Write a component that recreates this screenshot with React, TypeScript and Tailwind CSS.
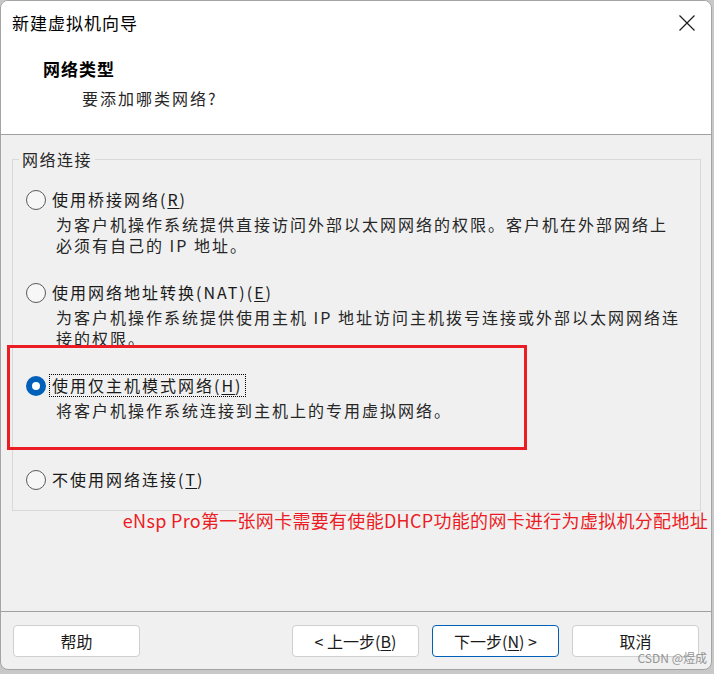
import React from 'react';

// 新建虚拟机向导 - 网络类型页
const cjk = { fontFamily: '"Noto Sans CJK SC", "Noto Sans", sans-serif' };

function Radio({ checked }: { checked?: boolean }) {
  if (checked) {
    return (
      <span className="flex h-[20px] w-[20px] shrink-0 items-center justify-center rounded-full bg-[#005fb8]">
        <span className="h-[8px] w-[8px] rounded-full bg-white" />
      </span>
    );
  }
  return <span className="h-[20px] w-[20px] shrink-0 rounded-full border-[1.5px] border-[#5a5a5a] bg-[#f7f7f7]" />;
}

function Option({
  label,
  hotkey,
  lines,
  checked,
  className,
}: {
  label: string;
  hotkey: string;
  lines?: string[];
  checked?: boolean;
  className?: string;
}) {
  return (
    <div className={className}>
      <div className="flex h-[21px] items-center">
        <Radio checked={checked} />
        <span
          className={`ml-[4px] whitespace-nowrap px-[2px] leading-[21px] ${
            checked ? 'outline outline-1 outline-dotted outline-black' : ''
          }`}
        >
          {label}(<span className="underline underline-offset-2">{hotkey}</span>)
        </span>
      </div>
      {lines && (
        <div className="mt-[4px] pl-[30px] leading-[21px] text-[#262626]">
          {lines.map(l => (
            <div key={l} className="whitespace-nowrap">
              {l}
            </div>
          ))}
        </div>
      )}
    </div>
  );
}

function Button({ children, primary }: { children: React.ReactNode; primary?: boolean }) {
  return (
    <button
      className={`h-[32px] w-[127px] rounded-[4px] border bg-white text-[16px] text-[#1a1a1a] ${
        primary ? 'border-[#005fb8]' : 'border-[#cfcfcf]'
      }`}
    >
      {children}
    </button>
  );
}

export default function App() {
  return (
    <div className="h-[674px] w-[714px] overflow-hidden bg-[#c8c8c8]" style={cjk}>
      <div className="relative flex h-[670px] w-[712px] flex-col overflow-hidden rounded-[8px] border border-[#a4a4a4] bg-[#f0f0f0]">
        {/* 标题栏 + 页头 */}
        <div className="h-[133px] bg-white">
          <div className="flex h-[44px] items-center justify-between pl-[11px] pr-[15px]">
            <span className="text-[17px] tracking-[1px] text-black">新建虚拟机向导</span>
            <svg width="18" height="18" viewBox="0 0 18 18" className="text-[#1a1a1a]">
              <path d="M1.5 1.5 L16.5 16.5 M16.5 1.5 L1.5 16.5" stroke="currentColor" strokeWidth="1.2" fill="none" />
            </svg>
          </div>
          <div className="mt-[13px] pl-[42px] text-[17px] font-bold leading-[22px] tracking-[1px] text-black">网络类型</div>
          <div className="mt-[7px] pl-[81px] text-[16px] leading-[22px] tracking-[2px] text-[#262626]">要添加哪类网络?</div>
        </div>
        <div className="h-px bg-[#a0a0a0]" />

        {/* 网络连接 */}
        <fieldset className="ml-[11px] mt-[14px] w-[689px] border border-[#d9d9d9] pb-[20px] pl-[13px] text-[16px] tracking-[2px] text-[#1a1a1a]">
          <legend className="ml-[-7px] px-[3px] text-[16px] leading-[20px] tracking-[1.5px] text-[#262626]">网络连接</legend>
          <Option
            className="mt-[20px]"
            label="使用桥接网络"
            hotkey="R"
            lines={['为客户机操作系统提供直接访问外部以太网网络的权限。客户机在外部网络上', '必须有自己的 IP 地址。']}
          />
          <Option
            className="mt-[26px]"
            label="使用网络地址转换(NAT)"
            hotkey="E"
            lines={['为客户机操作系统提供使用主机 IP 地址访问主机拨号连接或外部以太网网络连', '接的权限。']}
          />
          <Option
            className="mt-[26px]"
            label="使用仅主机模式网络"
            hotkey="H"
            checked
            lines={['将客户机操作系统连接到主机上的专用虚拟网络。']}
          />
          <Option className="mt-[48px]" label="不使用网络连接" hotkey="T" />
        </fieldset>

        <div className="mt-[-2px] pr-[3px] text-right text-[18px] leading-[22px] tracking-[0.3px] text-[#ec1c24]">
          eNsp Pro第一张网卡需要有使能DHCP功能的网卡进行为虚拟机分配地址
        </div>

        {/* 红框标注 */}
        <div className="absolute left-[6px] top-[344px] h-[105px] w-[520px] border-[3px] border-[#ec1c24]" />

        <div className="mt-[80px] h-px bg-[#a0a0a0]" />
        <div className="mt-[13px] flex items-center px-[12px]">
          <Button>帮助</Button>
          <div className="flex-1" />
          <div className="flex gap-[13px]">
            <Button>
              &lt; 上一步(<span className="underline underline-offset-2">B</span>)
            </Button>
            <Button primary>
              下一步(<span className="underline underline-offset-2">N</span>) &gt;
            </Button>
            <Button>取消</Button>
          </div>
        </div>

        <div className="absolute bottom-[4px] right-[4px] text-[12px] leading-[14px] text-[#8a8a8a] opacity-90">CSDN @煜成</div>
      </div>
    </div>
  );
}
